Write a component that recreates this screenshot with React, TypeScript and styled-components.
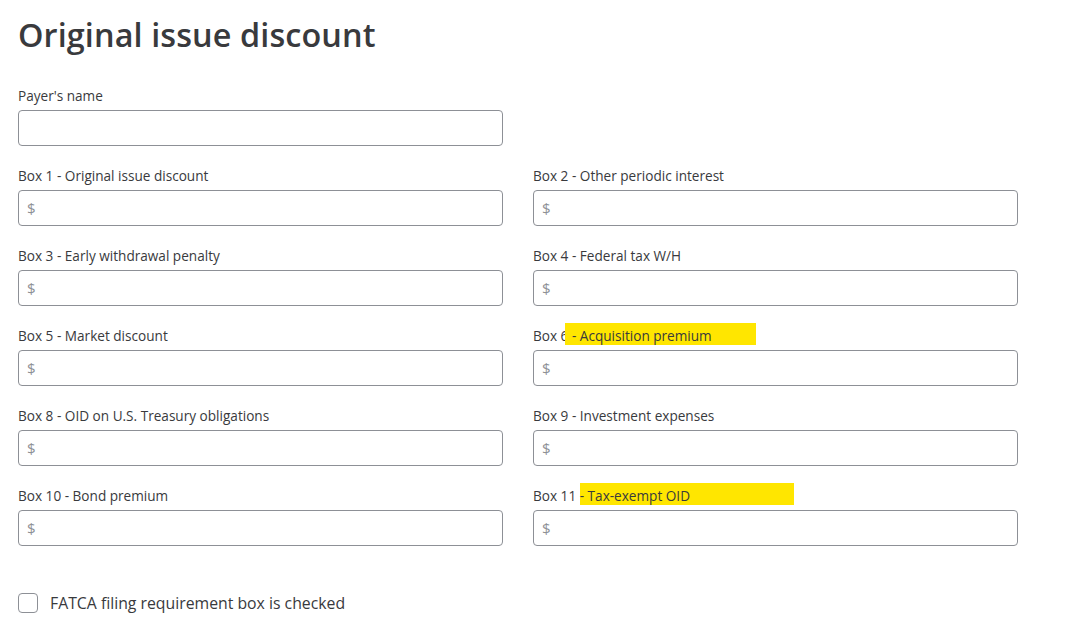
import styled, { createGlobalStyle } from "styled-components"

const GlobalStyle = createGlobalStyle`
body {
    margin: 0;
    background: #fff;
    font-family: "Open Sans", "Liberation Sans", sans-serif;
    color: #393a3d;
}
`

const leftFields = [
    { label: "Box 1 - Original issue discount" },
    { label: "Box 2 - Other periodic interest" },
    { label: "Box 3 - Early withdrawal penalty" },
    { label: "Box 4 - Federal tax W/H" },
    { label: "Box 5 - Market discount" },
    { label: "Box 6", mark: " - Acquisition premium", markPad: 44, markShift: 3 },
    { label: "Box 8 - OID on U.S. Treasury obligations" },
    { label: "Box 9 - Investment expenses" },
    { label: "Box 10 - Bond premium" },
    { label: "Box 11 ", mark: "- Tax-exempt OID", markPad: 104, markShift: 0 },
]

const App = () => {
    return (
        <Page>
            <GlobalStyle />
            <Title>Original issue discount</Title>
            <Grid>
                <Field>
                    <Label>Payer's name</Label>
                    <Input />
                </Field>
                <Spacer />
                {leftFields.map((f, i) => (
                    <Field key={i}>
                        <Label>
                            {f.label}
                            {f.mark && (
                                <Mark style={{ paddingRight: f.markPad, marginLeft: -f.markShift, paddingLeft: f.markShift }}>
                                    {f.mark}
                                </Mark>
                            )}
                        </Label>
                        <MoneyBox>
                            <Dollar>$</Dollar>
                            <MoneyInput />
                        </MoneyBox>
                    </Field>
                ))}
            </Grid>
            <CheckRow>
                <CheckBox type="checkbox" />
                <CheckText>FATCA filing requirement box is checked</CheckText>
            </CheckRow>
        </Page>
    )
}

export default App

const Page = styled.div`
padding: 14px 0 0 18px;
width: 1000px;
`
const Title = styled.h1`
margin: 0;
font-size: 32.4px;
line-height: 40px;
font-weight: 600;
color: #393a3d;
letter-spacing: 0.1px;
`
const Grid = styled.div`
display: grid;
grid-template-columns: 485px 485px;
column-gap: 30px;
row-gap: 21px;
margin-top: 33px;
`
const Spacer = styled.div``
const Field = styled.div`
display: flex;
flex-direction: column;
`
const Label = styled.label`
font-size: 13.6px;
line-height: 18px;
height: 18px;
margin-bottom: 5px;
color: #393a3d;
white-space: nowrap;
`
const Mark = styled.span`
background: #ffe600;
padding-top: 3px;
padding-bottom: 0;
`
const Input = styled.input`
box-sizing: border-box;
height: 36px;
width: 100%;
border: 1px solid #8d9096;
border-radius: 4px;
outline: none;
`
const MoneyBox = styled.div`
box-sizing: border-box;
height: 36px;
border: 1px solid #8d9096;
border-radius: 4px;
display: flex;
align-items: center;
padding-left: 8px;
`
const Dollar = styled.span`
font-size: 15px;
color: #8d9096;
`
const MoneyInput = styled.input`
border: none;
outline: none;
flex: 1;
height: 30px;
background: transparent;
`
const CheckRow = styled.div`
display: flex;
align-items: center;
gap: 12px;
margin-top: 46px;
`
const CheckBox = styled.input`
appearance: none;
margin: 0;
width: 20px;
height: 20px;
border: 1px solid #8d9096;
border-radius: 4px;
background: #fff;
`
const CheckText = styled.span`
font-size: 15.8px;
color: #393a3d;
`
